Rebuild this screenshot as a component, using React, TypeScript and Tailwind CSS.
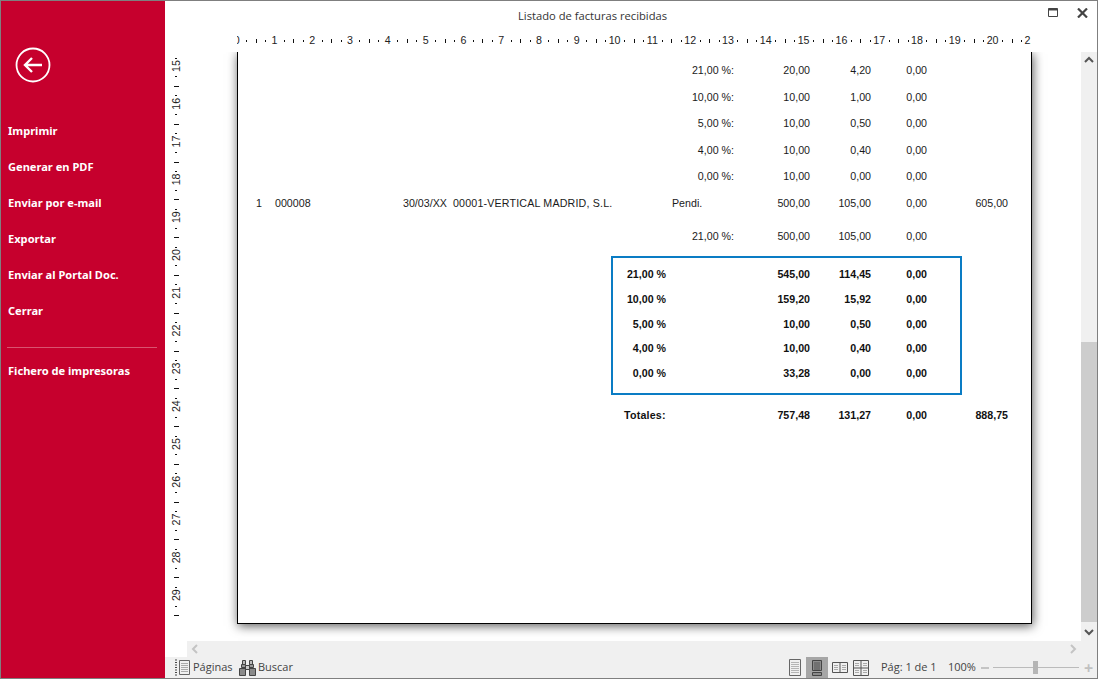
import React from 'react'

const menuItems = ['Imprimir', 'Generar en PDF', 'Enviar por e-mail', 'Exportar', 'Enviar al Portal Doc.', 'Cerrar']

const taxRows = [
  { h: 'h-[27px]', label: '21,00 %:', base: '20,00', iva: '4,20', rec: '0,00' },
  { h: 'h-[27px]', label: '10,00 %:', base: '10,00', iva: '1,00', rec: '0,00' },
  { h: 'h-[26px]', label: '5,00 %:', base: '10,00', iva: '0,50', rec: '0,00' },
  { h: 'h-[27px]', label: '4,00 %:', base: '10,00', iva: '0,40', rec: '0,00' },
  { h: 'h-[26px]', label: '0,00 %:', base: '10,00', iva: '0,00', rec: '0,00' },
]

const summaryRows = [
  { label: '21,00 %', base: '545,00', iva: '114,45', rec: '0,00' },
  { label: '10,00 %', base: '159,20', iva: '15,92', rec: '0,00' },
  { label: '5,00 %', base: '10,00', iva: '0,50', rec: '0,00' },
  { label: '4,00 %', base: '10,00', iva: '0,40', rec: '0,00' },
  { label: '0,00 %', base: '33,28', iva: '0,00', rec: '0,00' },
]

const Amounts = ({ base, iva, rec }: { base: string; iva: string; rec: string }) => (
  <>
    <span className="w-[76px] text-right">{base}</span>
    <span className="w-[61px] text-right">{iva}</span>
    <span className="w-[56px] text-right">{rec}</span>
  </>
)

const HorizontalRuler = () => {
  const step = 37.8
  const start = 71.6
  const ticks = Array.from({ length: 85 }, (_, i) => i)
  return (
    <svg width="932" height="22" className="block">
      <defs>
        <clipPath id="hclip">
          <rect x="72" y="0" width="794" height="22" />
        </clipPath>
      </defs>
      <g clipPath="url(#hclip)">
        {ticks.map((i) => {
          const x = Math.round(start + (i * step) / 4)
          if (i % 4 === 0) {
            return (
              <text key={i} x={start + (i * step) / 4} y="14" textAnchor="middle" fontSize="10.67" fontFamily="'Liberation Sans', sans-serif" fill="#222">
                {i / 4}
              </text>
            )
          }
          return i % 4 === 2 ? (
            <rect key={i} x={x} y="9" width="1" height="4" fill="#111" />
          ) : (
            <rect key={i} x={x} y="10" width="1" height="2" fill="#111" />
          )
        })}
      </g>
    </svg>
  )
}

const VerticalRuler = () => {
  const step = 37.8
  const ticks = Array.from({ length: 60 }, (_, i) => i - 1)
  return (
    <svg width="72" height="589" className="block shrink-0">
      {ticks.map((i) => {
        const y = 15 + (i * step) / 4
        if (i % 4 === 0) {
          return (
            <text key={i} x="0" y="0" transform={`translate(15 ${y - 1}) rotate(-90)`} textAnchor="middle" fontSize="10.67" fontFamily="'Liberation Sans', sans-serif" fill="#222">
              {15 + i / 4}
            </text>
          )
        }
        return Math.abs(i % 4) === 2 ? (
          <rect key={i} x="9" y={Math.round(y)} width="5" height="1" fill="#111" />
        ) : (
          <rect key={i} x="10" y={Math.round(y)} width="2" height="1" fill="#111" />
        )
      })}
    </svg>
  )
}

const Chevron = ({ d, color }: { d: string; color: string }) => (
  <svg width="10" height="10" viewBox="0 0 10 10" fill="none" stroke={color} strokeWidth="2">
    <path d={d} />
  </svg>
)

const PagesIcon = () => (
  <svg width="16" height="17" viewBox="0 0 16 17" fill="none" stroke="#444">
    <path d="M1 1h2M1 3.5h2M1 6h2M1 8.5h2M1 11h2M1 13.5h2M1 16h2" strokeWidth="1.2" />
    <path d="M5.5 1.5h10v14h-10z" stroke="#666" />
    <path d="M7 4.5h7M7 6.5h7M7 8.5h7M7 10.5h7M7 12.5h7" stroke="#aaa" />
  </svg>
)

const BinocularsIcon = () => (
  <svg width="17" height="16" viewBox="0 0 17 16" fill="#8a8a8a" stroke="#444">
    <path d="M3.5.5h3v4h-3zM10.5.5h3v4h-3z" fill="#bbb" />
    <path d="M2.5 4.5h4v3h-4zM10.5 4.5h4v3h-4z" fill="#999" />
    <path d="M.5 8.5h6v7h-6zM10.5 8.5h6v7h-6z" />
    <path d="M6.5 5.5h4v4h-4z" fill="#ccc" />
  </svg>
)

const PageViewIcon = () => (
  <svg width="12" height="17" viewBox="0 0 12 17" fill="none" stroke="#666">
    <path d="M.5.5h11v16H.5z" />
    <path d="M2 3.5h8M2 5.5h8M2 7.5h8M2 9.5h8M2 11.5h8M2 13.5h8" stroke="#b5b5b5" />
  </svg>
)

const ContinuousViewIcon = () => (
  <svg width="10" height="16" viewBox="0 0 10 16" fill="#8c8c8c" stroke="#444">
    <path d="M.5.5h9v10h-9z" />
    <path d="M.5 12.5h9v3h-9z" />
    <path d="M2 3h6M2 5h6M2 7h6M2 9h6" stroke="#555" />
  </svg>
)

const TwoPagesIcon = () => (
  <svg width="16" height="11" viewBox="0 0 16 11" fill="none" stroke="#555">
    <path d="M.5.5h15v10H.5zM8 .5v10" />
    <path d="M2 3.5h4M2 5.5h4M2 7.5h4M10 3.5h4M10 5.5h4M10 7.5h4" stroke="#aaa" />
  </svg>
)

const GridPagesIcon = () => (
  <svg width="16" height="16" viewBox="0 0 16 16" fill="none" stroke="#555">
    <path d="M.5.5h15v15H.5zM8 .5v15M.5 8h15" />
    <path d="M2 3.5h4M2 5.5h4M10 3.5h4M10 5.5h4M2 10.5h4M2 12.5h4M10 10.5h4M10 12.5h4" stroke="#aaa" />
  </svg>
)

export default function App() {
  return (
    <div className="w-[1098px] h-[679px] flex border border-[#7f7f7f] bg-white overflow-hidden font-['Liberation_Sans',sans-serif]">
      <aside className="w-[164px] shrink-0 bg-[#c6002d] text-white font-['Noto_Sans',sans-serif] text-[11.1px] font-bold">
        <div className="h-[112px] pl-[14px] pt-[46px]">
          <svg width="36" height="36" viewBox="0 0 36 36" fill="none" stroke="white">
            <circle cx="18" cy="18" r="16.5" strokeWidth="1.8" />
            <path d="M27 18H10M17 11l-7 7 7 7" strokeWidth="2.4" />
          </svg>
        </div>
        {menuItems.map((item) => (
          <div key={item} className="h-9 pl-[7px] flex items-center">{item}</div>
        ))}
        <div className="mt-[18px] ml-[6px] w-[150px] h-px bg-[#d9536f]" />
        <div className="mt-[5px] h-9 pl-[7px] flex items-center">Fichero de impresoras</div>
      </aside>

      <main className="flex-1 min-w-0 flex flex-col">
        <header className="h-[29px] shrink-0 flex items-center text-[11.2px] text-[#333] font-['Open_Sans',sans-serif]">
          <span className="ml-[353px] w-[530px] pt-[2px]">Listado de facturas recibidas</span>
          <svg className="self-start mt-[7px]" width="11" height="10" viewBox="0 0 11 10" fill="none" stroke="#444">
            <path d="M.5.5h9v8h-9z" />
            <path d="M.5 1.5h9" strokeWidth="2" />
          </svg>
          <svg className="self-start mt-[7px] ml-[18px]" width="11" height="10" viewBox="0 0 11 10" fill="none" stroke="#444" strokeWidth="2.2">
            <path d="M1 .5l9 9M10 .5l-9 9" />
          </svg>
        </header>

        <div className="h-[22px] shrink-0">
          <HorizontalRuler />
        </div>

        <div className="h-[589px] shrink-0 flex">
          <div className="flex-1 min-w-0 flex overflow-hidden">
            <VerticalRuler />
            <div className="w-[795px] h-[572px] shrink-0 border-x border-b border-black bg-white shadow-[1px_2px_10px_rgba(0,0,0,0.65)] text-[10.67px] text-[#1a1a1a] pt-[4px]">
              {taxRows.map((row) => (
                <div key={row.label} className={`${row.h} flex items-center`}>
                  <span className="w-[496px] text-right">{row.label}</span>
                  <Amounts base={row.base} iva={row.iva} rec={row.rec} />
                </div>
              ))}
              <div className="h-[27px] flex items-center">
                <span className="w-[19px] ml-[18px]">1</span>
                <span className="w-[128px]">000008</span>
                <span className="w-[50px]">30/03/XX</span>
                <span className="w-[219px] tracking-[0.18px]">00001-VERTICAL MADRID, S.L.</span>
                <span className="w-[62px]">Pendi.</span>
                <Amounts base="500,00" iva="105,00" rec="0,00" />
                <span className="w-[81px] text-right">605,00</span>
              </div>
              <div className="mt-[7px] h-[26px] flex items-center">
                <span className="w-[496px] text-right">21,00 %:</span>
                <Amounts base="500,00" iva="105,00" rec="0,00" />
              </div>

              <div className="mt-[7px] ml-[373px] w-[351px] h-[139px] border-2 border-[#0a7cc4] pt-[4px] font-bold text-[#111]">
                {summaryRows.map((row) => (
                  <div key={row.label} className="h-[24.7px] flex items-center">
                    <span className="w-[53px] text-right">{row.label}</span>
                    <span className="w-[68px]" />
                    <Amounts base={row.base} iva={row.iva} rec={row.rec} />
                  </div>
                ))}
              </div>

              <div className="mt-[8px] h-[24px] flex items-center font-bold text-[#111]">
                <span className="w-[428px] pl-[386px] tracking-[0.2px]">Totales:</span>
                <span className="w-[68px]" />
                <Amounts base="757,48" iva="131,27" rec="0,00" />
                <span className="w-[81px] text-right">888,75</span>
              </div>
            </div>
          </div>

          <div className="w-4 shrink-0 bg-[#f0f0f0] flex flex-col items-center">
            <div className="h-[16px] flex items-center justify-center">
              <Chevron d="M1 7l4-4 4 4" color="#555" />
            </div>
            <div className="mt-[274px] w-full h-[280px] bg-[#cdcdcd]" />
            <div className="h-[19px] flex items-center justify-center">
              <Chevron d="M1 3l4 4 4-4" color="#555" />
            </div>
          </div>
        </div>

        <div className="h-4 shrink-0 ml-[22px] bg-[#f0f0f0] flex items-center justify-between pl-[3px] pr-[19px]">
          <Chevron d="M7 1L3 5l4 4" color="#c4c4c4" />
          <Chevron d="M3 1l4 4-4 4" color="#c4c4c4" />
        </div>

        <footer className="h-[21px] shrink-0 bg-[#f0f0f0] flex items-center text-[11px] text-[#444] font-['Open_Sans',sans-serif]">
          <span className="ml-[9px]"><PagesIcon /></span>
          <span className="ml-[3px] w-[46px]">Páginas</span>
          <BinocularsIcon />
          <span className="ml-[2px] w-[531px]">Buscar</span>
          <PageViewIcon />
          <span className="ml-[5px] w-[22px] h-[21px] bg-[#a6a6a6] flex items-center justify-center"><ContinuousViewIcon /></span>
          <span className="ml-[4px]"><TwoPagesIcon /></span>
          <span className="ml-[5px]"><GridPagesIcon /></span>
          <span className="ml-[12px] w-[67px]">Pág: 1 de 1</span>
          <span className="w-[33px]">100%</span>
          <div className="flex items-center w-[115px]">
            <span className="w-2 h-[2px] bg-[#c4c4c4]" />
            <div className="ml-[4px] w-[86px] h-px bg-[#bbb] relative">
              <span className="absolute left-[40px] -top-[6px] w-[5px] h-[13px] bg-[#b5b5b5]" />
            </div>
            <span className="ml-[5px] text-[#c0c0c0] text-[16px] font-bold leading-none">+</span>
          </div>
        </footer>
      </main>
    </div>
  )
}
